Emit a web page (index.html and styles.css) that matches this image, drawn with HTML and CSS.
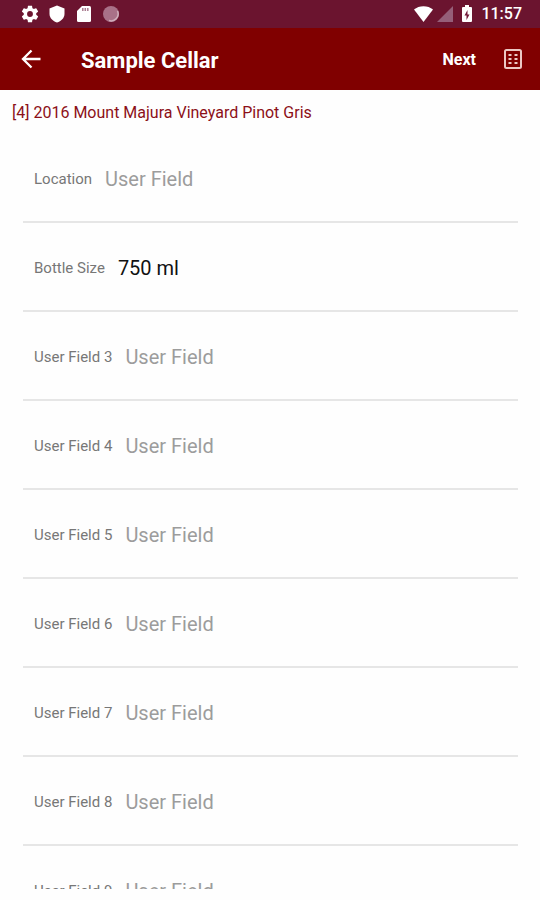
FILE: index.html
```html
<!DOCTYPE html>
<html lang="en">
<head>
<meta charset="utf-8">
<meta name="viewport" content="width=device-width, initial-scale=1">
<title>Sample Cellar</title>
<link rel="stylesheet" href="styles.css">
</head>
<body>
<div class="status">
  <div class="status-group notices">
    <svg width="20" height="20" viewBox="0 0 24 24" fill="#fff" aria-hidden="true"><path d="M19.43 12.98c.04-.32.07-.64.07-.98s-.03-.66-.07-.98l2.11-1.65c.19-.15.24-.42.12-.64l-2-3.46c-.12-.22-.39-.3-.61-.22l-2.49 1c-.52-.4-1.08-.73-1.69-.98l-.38-2.65C14.46 2.18 14.25 2 14 2h-4c-.25 0-.46.18-.49.42l-.38 2.65c-.61.25-1.17.59-1.69.98l-2.49-1c-.23-.09-.49 0-.61.22l-2 3.46c-.13.22-.07.49.12.64l2.11 1.65c-.04.32-.07.65-.07.98s.03.66.07.98l-2.11 1.65c-.19.15-.24.42-.12.64l2 3.46c.12.22.39.3.61.22l2.49-1c.52.4 1.08.73 1.69.98l.38 2.65c.03.24.24.42.49.42h4c.25 0 .46-.18.49-.42l.38-2.65c.61-.25 1.17-.59 1.69-.98l2.49 1c.23.09.49 0 .61-.22l2-3.46c.12-.22.07-.49-.12-.64l-2.11-1.65zM12 15.5a3.5 3.5 0 1 1 0-7 3.500 3.500 0 0 1 0 7z"/></svg>
    <svg width="20" height="20" viewBox="0 0 20 20" fill="#fff" aria-hidden="true"><path d="M10 1.500 17.500 4.500V10c0 4-3.500 7.300-7.500 8.500C6 17.300 2.500 14 2.500 10V4.500z"/></svg>
    <svg width="20" height="20" viewBox="0 0 20 20" aria-hidden="true"><path fill="#fff" d="M8 2h7.500A1.500 1.500 0 0 1 17 3.500v13a1.500 1.500 0 0 1-1.500 1.500h-11A1.500 1.500 0 0 1 3 16.500V7z"/><path stroke="#a97c90" stroke-width="1.500" d="M8.800 4v3M11.300 4v3M13.800 4v3"/></svg>
    <svg width="20" height="20" viewBox="0 0 20 20" aria-hidden="true"><circle cx="10" cy="10" r="8" fill="#a97188"/><path fill="none" stroke="#d0aebb" stroke-width="1.500" d="M16.500 7a7 7 0 0 1-8.500 9.500"/></svg>
  </div>
  <div class="status-group">
    <svg width="20" height="20" viewBox="0 0 20 20" fill="#fff" aria-hidden="true"><path d="M1 5.500C6 1 15 1 20 5.500L10.500 18z"/></svg>
    <svg width="20" height="20" viewBox="0 0 20 20" fill="#955f79" aria-hidden="true"><path d="M18 2v16H2z"/></svg>
    <svg width="20" height="20" viewBox="0 0 20 20" aria-hidden="true"><path fill="#fff" d="M8 1h4v2h2q1 0 1 1v13q0 1-1 1H6q-1 0-1-1V4q0-1 1-1h2z"/><path fill="#701536" d="M10.500 6 7.500 11.500h2V16l3-5.500h-2z"/></svg>
    <span class="clock">11:57</span>
  </div>
</div>
<header class="bar">
  <button class="icon-button" type="button" aria-label="Back">
    <svg width="24" height="24" viewBox="0 0 24 24" fill="none" stroke="#fff" stroke-width="2.300" aria-hidden="true"><path d="M21.500 12H4.500M12.500 3.500 4 12l8.500 8.500"/></svg>
  </button>
  <h1 class="title">Sample Cellar</h1>
  <button class="next" type="button">Next</button>
  <button class="icon-button" type="button" aria-label="Show list">
    <svg width="24" height="24" viewBox="0 0 24 24" fill="none" stroke="#ecc8c4" aria-hidden="true"><rect x="4" y="3" width="16" height="18" rx="1.500" stroke-width="2"/><path stroke-width="2" d="M7.500 8h3M7.500 12h3M7.500 16h3M13.500 8h3M13.500 12h3M13.500 16h3"/></svg>
  </button>
</header>
<main class="content">
  <h2 class="wine">[4] 2016 Mount Majura Vineyard Pinot Gris</h2>
  <form class="fields">
    <div class="field"><label for="f1">Location</label><input id="f1" type="text" placeholder="User Field"></div>
    <div class="field"><label for="f2">Bottle Size</label><input id="f2" type="text" placeholder="User Field" value="750 ml"></div>
    <div class="field"><label for="f3">User Field 3</label><input id="f3" type="text" placeholder="User Field"></div>
    <div class="field"><label for="f4">User Field 4</label><input id="f4" type="text" placeholder="User Field"></div>
    <div class="field"><label for="f5">User Field 5</label><input id="f5" type="text" placeholder="User Field"></div>
    <div class="field"><label for="f6">User Field 6</label><input id="f6" type="text" placeholder="User Field"></div>
    <div class="field"><label for="f7">User Field 7</label><input id="f7" type="text" placeholder="User Field"></div>
    <div class="field"><label for="f8">User Field 8</label><input id="f8" type="text" placeholder="User Field"></div>
    <div class="field"><label for="f9">User Field 9</label><input id="f9" type="text" placeholder="User Field"></div>
  </form>
</main>
</body>
</html>
```
FILE: styles.css
```css
* {
  box-sizing: border-box;
}

body {
  display: flex;
  flex-direction: column;
  height: 100vh;
  margin: 0;
  padding-bottom: 11px;
  background: #fefefe;
  font-family: Roboto, "Liberation Sans", sans-serif;
}

.status {
  display: flex;
  flex: none;
  align-items: center;
  justify-content: space-between;
  height: 28px;
  padding: 0 18px 0 20px;
  background: #6b142f;
  color: #fff;
}

.status-group {
  display: flex;
  align-items: center;
  gap: 2px;
}

.notices {
  gap: 7px;
}

.clock {
  margin-left: 2px;
  font-size: 16px;
  font-weight: 500;
  line-height: 20px;
}

.bar {
  display: flex;
  flex: none;
  align-items: center;
  height: 62px;
  padding: 0 15px 0 19px;
  background: #800000;
  color: #fff;
}

.icon-button,
.next {
  padding: 0;
  border: 0;
  background: none;
  color: inherit;
  font: inherit;
}

.icon-button {
  display: flex;
}

.title {
  flex: 1;
  margin: 0 0 0 38px;
  padding-top: 3px;
  font-size: 22px;
  font-weight: 700;
  line-height: 28px;
}

.next {
  margin-right: 25px;
  font-size: 16px;
  font-weight: 700;
}

.content {
  flex: 1;
  min-height: 0;
  overflow: hidden;
}

.wine {
  margin: 0;
  padding: 11px 12px 0;
  color: #8c1018;
  font-size: 16px;
  font-weight: 400;
  line-height: 24px;
}

.fields {
  padding: 9px 22px 0 23px;
}

.field {
  display: flex;
  align-items: center;
  gap: 13px;
  height: 89px;
  padding: 2px 0 0 11px;
  border-bottom: 2px solid #e6e6e6;
}

.field label {
  color: #777;
  font-size: 15px;
}

.field input {
  flex: 1;
  min-width: 0;
  padding: 0;
  border: 0;
  outline: 0;
  background: none;
  color: #111;
  font: inherit;
  font-size: 20px;
}

.field input::placeholder {
  color: #9c9c9c;
  opacity: 1;
}
```
